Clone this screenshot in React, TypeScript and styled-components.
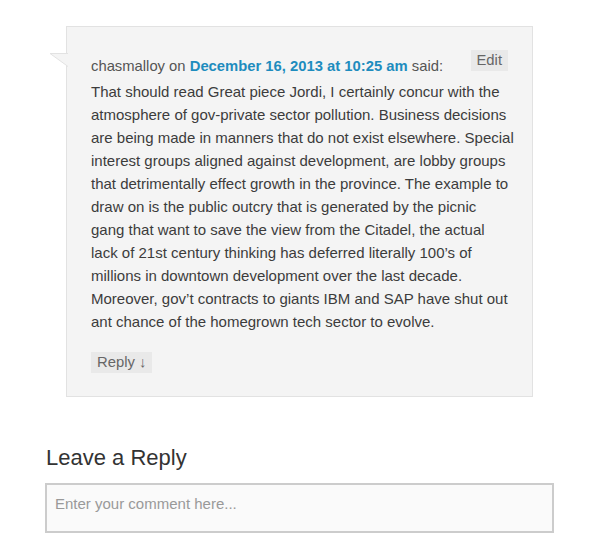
import styled, { createGlobalStyle } from "styled-components";

const GlobalStyle = createGlobalStyle`
  html, body {
    margin: 0;
    padding: 0;
    background: #ffffff;
  }
  body {
    font-family: "Liberation Sans", Arial, sans-serif;
    color: #3c3c3c;
  }
`;

const commentLines = [
  "That should read Great piece Jordi, I certainly concur with the",
  "atmosphere of gov-private sector pollution. Business decisions",
  "are being made in manners that do not exist elsewhere. Special",
  "interest groups aligned against development, are lobby groups",
  "that detrimentally effect growth in the province. The example to",
  "draw on is the public outcry that is generated by the picnic",
  "gang that want to save the view from the Citadel, the actual",
  "lack of 21st century thinking has deferred literally 100’s of",
  "millions in downtown development over the last decade.",
  "Moreover, gov’t contracts to giants IBM and SAP have shut out",
  "ant chance of the homegrown tech sector to evolve.",
];

const App = () => {
  return (
    <Page>
      <GlobalStyle />
      <CommentBox>
        <Pointer width="18" height="14" viewBox="0 0 18 14">
          <polygon points="0,0.5 18,0.5 18,13.5" fill="#f4f4f4" />
          <polyline
            points="18,0.5 0,0.5 18,13.5"
            fill="none"
            stroke="#e2e2e2"
            strokeWidth="1"
          />
        </Pointer>
        <CommentHeader>
          <Meta>
            chasmalloy on <DateLink href="#">December 16, 2013 at 10:25 am</DateLink> said:
          </Meta>
          <SmallButton>Edit</SmallButton>
        </CommentHeader>
        <CommentText>
          {commentLines.map((line, i) => (
            <span key={i}>
              {line}
              {i < commentLines.length - 1 && <br />}
            </span>
          ))}
        </CommentText>
        <ReplyRow>
          <SmallButton>Reply ↓</SmallButton>
        </ReplyRow>
      </CommentBox>

      <ReplyTitle>Leave a Reply</ReplyTitle>
      <CommentInput placeholder="Enter your comment here..." />
    </Page>
  );
};

const Page = styled.div`
  width: 600px;
  height: 549px;
  box-sizing: border-box;
  padding: 26px 0 0 45px;
  display: flex;
  flex-direction: column;
  overflow: hidden;
`;

const CommentBox = styled.div`
  position: relative;
  margin-left: 21px;
  width: 467px;
  box-sizing: border-box;
  background: #f4f4f4;
  border: 1px solid #e2e2e2;
  padding: 28px 24px 23px 24px;
  display: flex;
  flex-direction: column;
`;

const Pointer = styled.svg`
  position: absolute;
  left: -17px;
  top: 26px;
`;

const CommentHeader = styled.div`
  display: flex;
  justify-content: space-between;
  align-items: flex-start;
  margin-bottom: 2px;
`;

const Meta = styled.div`
  font-size: 14.8px;
  line-height: 23px;
  color: #555555;
`;

const DateLink = styled.a`
  color: #1e8cbe;
  font-weight: bold;
  text-decoration: none;
`;

const SmallButton = styled.span`
  display: inline-block;
  background: #e9e9e9;
  color: #666666;
  font-size: 14.8px;
  line-height: 21px;
  padding: 0 6px;
  margin-top: -5px;
`;

const CommentText = styled.p`
  margin: 0;
  font-size: 15px;
  line-height: 23px;
  color: #3c3c3c;
  white-space: nowrap;
`;

const ReplyRow = styled.div`
  display: flex;
  margin-top: 24px;
`;

const ReplyTitle = styled.h3`
  margin: 47px 0 0 1px;
  font-size: 22px;
  line-height: 28px;
  font-weight: normal;
  color: #333333;
`;

const CommentInput = styled.textarea`
  margin-top: 11px;
  width: 509px;
  height: 50px;
  box-sizing: border-box;
  border: 2px solid #cccccc;
  background: #fafafa;
  padding: 10px 8px;
  font-family: "Liberation Sans", Arial, sans-serif;
  font-size: 15px;
  resize: none;
  outline: none;

  &::placeholder {
    color: #999999;
  }
`;

export default App;
